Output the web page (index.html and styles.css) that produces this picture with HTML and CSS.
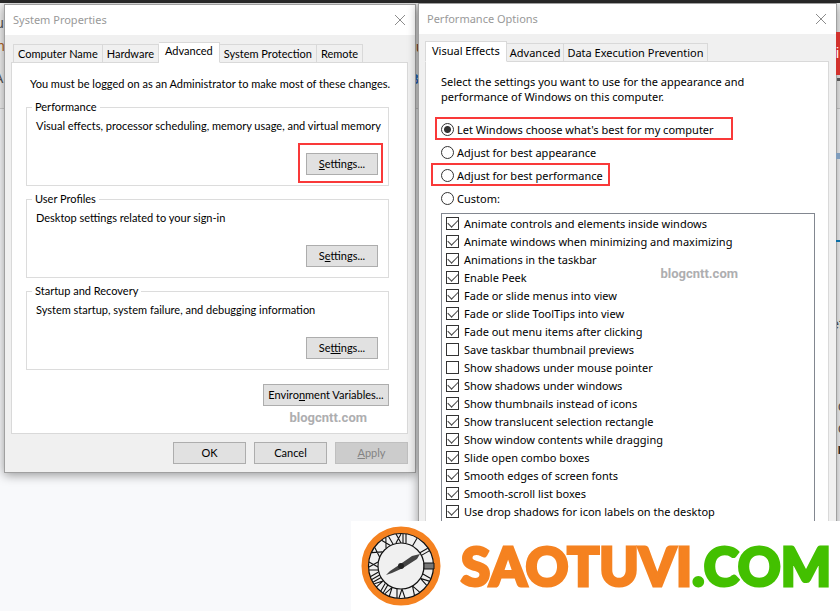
FILE: index.html
```html
<!DOCTYPE html>
<html lang="en">
<head>
<meta charset="utf-8">
<title>Performance Options</title>
<link rel="stylesheet" href="styles.css">
</head>
<body>
<main class="desktop">
  <div class="backdrop" aria-hidden="true">
    <div class="back-head"></div>
    <span class="frag frag-u">u</span>
    <span class="frag frag-h">h</span>
    <span class="frag frag-a">A</span>
    <span class="frag frag-mid-u">u</span>
    <span class="frag frag-b">B</span>
    <span class="frag frag-red">i</span>
    <span class="frag frag-caret"></span>
    <span class="frag frag-chip"></span>
    <span class="frag frag-line"></span>
    <span class="frag frag-et">ef</span>
    <span class="frag frag-c1">c</span>
    <span class="frag frag-c2">.c</span>
    <span class="frag frag-n">n</span>
  </div>

  <section class="window system">
    <header class="titlebar">
      <h1>System Properties</h1>
      <button class="close" aria-label="Close"><svg viewBox="0 0 12 12"><path d="M1 1 11 11M11 1 1 11"/></svg></button>
    </header>
    <div class="body">
      <nav class="tabs">
        <button class="tab">Computer Name</button>
        <button class="tab">Hardware</button>
        <button class="tab active">Advanced</button>
        <button class="tab">System Protection</button>
        <button class="tab">Remote</button>
      </nav>
      <div class="panel">
        <p class="intro">You must be logged on as an Administrator to make most of these changes.</p>
        <fieldset class="group">
          <legend>Performance</legend>
          <p>Visual effects, processor scheduling, memory usage, and virtual memory</p>
          <span class="marked"><button class="btn"><u>S</u>ettings...</button></span>
        </fieldset>
        <fieldset class="group">
          <legend>User Profiles</legend>
          <p>Desktop settings related to your sign-in</p>
          <span><button class="btn">S<u>e</u>ttings...</button></span>
        </fieldset>
        <fieldset class="group">
          <legend>Startup and Recovery</legend>
          <p>System startup, system failure, and debugging information</p>
          <span><button class="btn">Se<u>t</u>tings...</button></span>
        </fieldset>
        <div class="env"><button class="btn">Enviro<u>n</u>ment Variables...</button></div>
        <p class="mark">blogcntt.com</p>
      </div>
      <footer class="actions">
        <button class="btn">OK</button>
        <button class="btn">Cancel</button>
        <button class="btn" disabled><u>A</u>pply</button>
      </footer>
    </div>
  </section>

  <section class="window performance">
    <header class="titlebar">
      <h1>Performance Options</h1>
      <button class="close" aria-label="Close"><svg viewBox="0 0 12 12"><path d="M1 1 11 11M11 1 1 11"/></svg></button>
    </header>
    <div class="body">
      <nav class="tabs">
        <button class="tab active">Visual Effects</button>
        <button class="tab">Advanced</button>
        <button class="tab">Data Execution Prevention</button>
      </nav>
      <div class="panel">
        <p class="intro">Select the settings you want to use for the appearance and performance of Windows on this computer.</p>
        <div class="choices">
          <label class="choice marked"><input type="radio" name="fx" checked>Let Windows choose what's best for my computer</label>
          <label class="choice"><input type="radio" name="fx">Adjust for best appearance</label>
          <label class="choice marked wide"><input type="radio" name="fx">Adjust for best performance</label>
          <label class="choice"><input type="radio" name="fx">Custom:</label>
        </div>
        <div class="effects">
          <label><input type="checkbox" checked>Animate controls and elements inside windows</label>
          <label><input type="checkbox" checked>Animate windows when minimizing and maximizing</label>
          <label><input type="checkbox" checked>Animations in the taskbar</label>
          <label><input type="checkbox" checked>Enable Peek</label>
          <label><input type="checkbox" checked>Fade or slide menus into view</label>
          <label><input type="checkbox" checked>Fade or slide ToolTips into view</label>
          <label><input type="checkbox" checked>Fade out menu items after clicking</label>
          <label><input type="checkbox">Save taskbar thumbnail previews</label>
          <label><input type="checkbox">Show shadows under mouse pointer</label>
          <label><input type="checkbox" checked>Show shadows under windows</label>
          <label><input type="checkbox" checked>Show thumbnails instead of icons</label>
          <label><input type="checkbox" checked>Show translucent selection rectangle</label>
          <label><input type="checkbox" checked>Show window contents while dragging</label>
          <label><input type="checkbox" checked>Slide open combo boxes</label>
          <label><input type="checkbox" checked>Smooth edges of screen fonts</label>
          <label><input type="checkbox" checked>Smooth-scroll list boxes</label>
          <label><input type="checkbox" checked>Use drop shadows for icon labels on the desktop</label>
          <span class="mark">blogcntt.com</span>
        </div>
      </div>
    </div>
  </section>

  <aside class="brand">
    <svg class="clock" viewBox="-40 -40 80 80" role="img" aria-label="Clock">
      <circle r="36" fill="#fff" stroke="#f58220" stroke-width="7"/>
      <circle r="32.5" fill="#f0f0f0" stroke="#111" stroke-width="1.2"/>
      <g stroke="#111" stroke-width="1.1" fill="none">
        <path d="M-5-32 0-23M0-32-5-23M2-32V-23M5-32V-23"/>
        <path transform="rotate(30)" d="M0-32V-23"/>
        <path transform="rotate(60)" d="M-2-32V-23M1-32V-23"/>
        <path transform="rotate(120)" d="M-4-32V-23M-1-32 1-23 4-32"/>
        <path transform="rotate(150)" d="M-3-32 0-23 3-32"/>
        <path transform="rotate(180)" d="M-4-32-1-23 2-32M4-32V-23"/>
        <path transform="rotate(210)" d="M-5-32-3-23 0-32M2-32V-23M5-32V-23"/>
        <path transform="rotate(240)" d="M-6-32-4-23-2-32M0-32V-23M3-32V-23M6-32V-23"/>
        <path transform="rotate(270)" d="M-4-32V-23M-1-32 4-23M4-32-1-23"/>
        <path transform="rotate(300)" d="M-3-32 3-23M3-32-3-23"/>
        <path transform="rotate(330)" d="M-4-32 1-23M1-32-4-23M4-32V-23"/>
      </g>
      <circle r="23" fill="#f0f0f0" stroke="#111" stroke-width="1.2"/>
      <path d="M23-3H33V3H23Z" fill="#777" stroke="#111"/>
      <path d="M-15 9-11 5-2-1 11-10 19-12 16-7 2 2-9 7Z" fill="#444"/>
      <circle r="3" fill="#222"/>
    </svg>
    <p class="wordmark">SAOTUVI<span>.COM</span></p>
  </aside>
</main>
</body>
</html>
```
FILE: styles.css
```css
* { box-sizing: border-box; }
body { margin: 0; }
p, h1, fieldset, legend { margin: 0; padding: 0; font-weight: 400; }
button, input { font: inherit; color: inherit; margin: 0; }

.desktop {
  position: relative;
  height: 100vh;
  overflow: hidden;
  background: #f8f9fb;
  color: #000;
}

/* page behind the windows */
.backdrop { position: absolute; inset: 0; font: 14px/16px "Liberation Sans", sans-serif; color: #555; }
.back-head { height: 109px; background: #f1f1f1; border-top: 3px solid #2b2b2b; border-bottom: 1px solid #d0d0d0; }
.frag { position: absolute; }
.frag-u { left: -4px; top: 15px; }
.frag-h { left: -3px; top: 38px; color: #b5651d; }
.frag-a { left: -6px; top: 70px; }
.frag-mid-u { left: 416px; top: 39px; color: #8a4a1a; }
.frag-b { left: 409px; top: 71px; color: #2a6fd0; font-weight: 700; }
.frag-red { right: 0; top: 32px; width: 4px; height: 43px; background: #d2322d; color: #fff; line-height: 43px; z-index: 1; overflow: hidden; }
.frag-caret { right: 0; top: 78px; width: 3px; height: 3px; background: #555; z-index: 1; }
.frag-chip { right: 0; top: 153px; width: 4px; height: 6px; background: #7f9dbd; z-index: 1; }
.frag-line { right: 0; top: 240px; width: 4px; height: 2px; background: #0a6ea6; z-index: 1; }
.frag-et { right: -3px; top: 316px; }
.frag-c1 { right: -5px; top: 398px; }
.frag-c2 { right: -5px; top: 420px; }
.frag-n { right: -6px; top: 441px; font-weight: 700; color: #333; }

/* windows */
.window {
  position: absolute;
  display: flex;
  flex-direction: column;
  border: 1px solid #a0a0a0;
  background: #f0f0f0;
  box-shadow: 0 2px 10px rgba(0, 0, 0, .4);
}
.system { left: 4px; top: 4px; width: 412px; font: 11px/14px Lato, sans-serif; }
.performance { left: 418px; top: 3px; bottom: -10px; width: 419px; font: 11px/15px "Noto Sans", sans-serif; }
.titlebar {
  display: flex;
  align-items: center;
  justify-content: space-between;
  height: 30px;
  padding: 0 9px 0 8px;
  background: #fff;
  color: #999;
}
.titlebar h1 { font: 11px/16px "Noto Sans", sans-serif; }
.close { display: flex; padding: 0; border: 0; background: none; }
.close svg { width: 12px; height: 12px; fill: none; stroke: #8c8c8c; stroke-width: 1; }
.body { display: flex; flex-direction: column; flex: 1; padding: 6px 7px 8px 6px; }

.tabs { display: flex; align-items: flex-end; height: 22px; margin-bottom: -1px; position: relative; }
.system .tabs { padding-left: 2px; }
.tab {
  height: 19px;
  padding: 0 4px;
  border: 1px solid #d9d9d9;
  border-left-width: 0;
  background: #f0f0f0;
  white-space: nowrap;
}
.performance .tab { padding: 0 3px; }
.tab:first-child { border-left-width: 1px; }
.tab.active, .performance .tab.active { height: 21px; padding: 0 6px 3px; background: #fff; border-bottom-color: #fff; }
.panel { border: 1px solid #d9d9d9; background: #fff; }

.system .panel { padding: 14px 18px 5px 14px; }
.system .intro { margin: 0 0 9px 4px; }
.system .panel p { white-space: nowrap; }
.group { min-width: 0; height: 86px; margin-bottom: 6px; padding: 0 10px; border: 1px solid #dcdcdc; display: flow-root; }
.group legend { margin-left: -5px; padding: 0 3px; height: 14px; }
.group p { margin: 5px 0 20px -1px; }
.group span { display: block; position: relative; width: 72px; margin-left: auto; }
.btn {
  width: 73px;
  height: 22px;
  padding: 0;
  border: 1px solid #adadad;
  background: #e1e1e1;
  display: block;
  white-space: nowrap;
}
.btn:disabled { background: #ccc; border-color: #bfbfbf; color: #838383; }
.group .btn { width: 100%; }
.env { display: flex; justify-content: flex-end; margin-top: 14px; }
.env .btn { width: 126px; }
.mark { color: #aeaeb0; font: 700 13px/20px Roboto, sans-serif; }
.system .mark { margin-right: 22px; margin-top: 2px; text-align: right; }
.actions { display: flex; justify-content: flex-end; gap: 8px; margin-top: 8px; }

.marked { position: relative; }
.marked::after { content: ""; position: absolute; border: 2px solid #f93939; pointer-events: none; }
.group .marked::after { inset: -10px -5px -8px -8px; }

.performance .panel { flex: 1; display: flex; flex-direction: column; padding: 12px 13px 0 15px; }
.performance .intro { max-width: 330px; }
.choices { display: flex; flex-direction: column; align-items: flex-start; gap: 5px; margin: 16px 0 6px; }
.choice { display: flex; align-items: center; gap: 3px; height: 18px; }
.choice.marked::after { inset: -3px -19px -2px -6px; }
.choice.wide::after { inset: -3px -7px -2px -10px; }
input { appearance: none; width: 13px; height: 13px; border: 1px solid #333; background: #fff; flex: none; }
input[type="radio"] { border-radius: 50%; }
input[type="radio"]:checked { background: radial-gradient(circle, #333 3px, #fff 4px); }
.effects { position: relative; flex: 1; padding: 0 4px; border: 1px solid #828790; }
.effects label { display: flex; align-items: center; gap: 5px; height: 18px; white-space: nowrap; }
.effects input { display: grid; place-items: center; }
.effects input:checked::before {
  content: "";
  width: 9px;
  height: 5px;
  margin-top: -3px;
  border: solid #444;
  border-width: 0 0 1px 1px;
  transform: rotate(-45deg);
}
.effects .mark { position: absolute; right: 76px; top: 50px; }

/* logo strip */
.brand {
  position: absolute;
  left: 351px;
  right: 0;
  bottom: 0;
  height: 90px;
  display: flex;
  align-items: center;
  gap: 20px;
  padding-left: 10px;
  background: #fff;
}
.clock { width: 80px; height: 80px; flex: none; }
.wordmark { font: 900 53px/70px Lato, sans-serif; color: #f58220; white-space: nowrap; -webkit-text-stroke: 3px currentColor; }
.wordmark span { color: #43c000; }
```
